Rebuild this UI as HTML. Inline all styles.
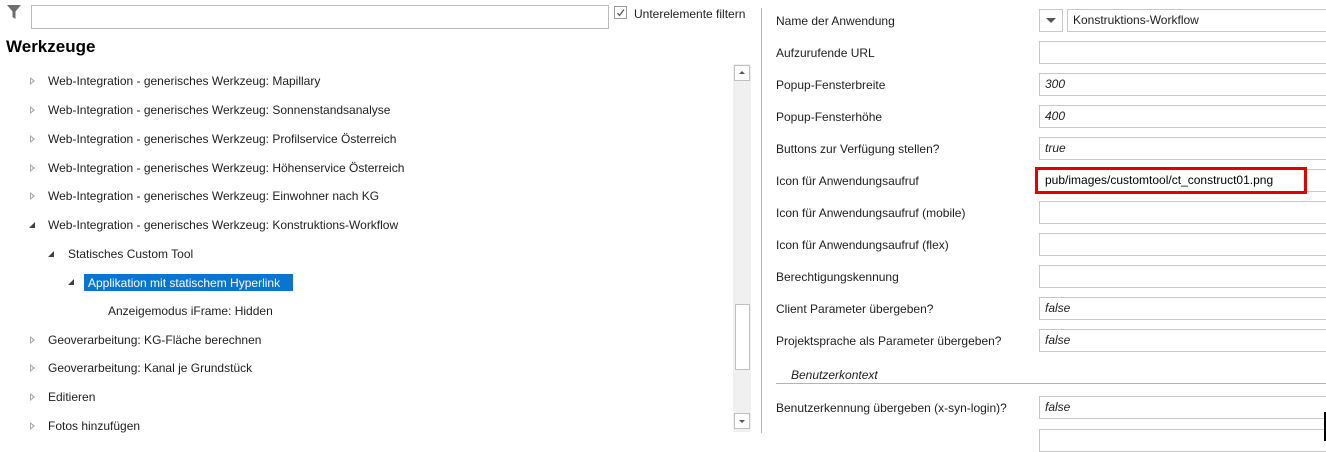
<!DOCTYPE html>
<html><head><meta charset="utf-8"><style>
*{margin:0;padding:0;box-sizing:border-box}
body{width:1326px;height:441px;background:#fff;position:relative;overflow:hidden;font-family:"Liberation Sans",sans-serif;font-size:12px;color:#1e1e1e}
.a{position:absolute;white-space:nowrap}
.t{position:absolute;white-space:nowrap;line-height:16px}
.ex{position:absolute;width:0;height:0;border-top:4px solid transparent;border-bottom:4px solid transparent;border-left:5px solid #a8a8a8}
.ex::after{content:"";position:absolute;left:-4px;top:-2px;border-top:2px solid transparent;border-bottom:2px solid transparent;border-left:2.5px solid #fff}
.co{position:absolute;width:0;height:0;border-left:6px solid transparent;border-bottom:6px solid #404040}
.inp{position:absolute;left:1039px;width:300px;height:23px;border:1px solid #c8c8c8;font-style:italic;font-size:12px;line-height:21px;padding-left:5px}
.lb{position:absolute;left:776px;line-height:16px;white-space:nowrap}
</style></head><body>
<!-- filter icon -->
<svg class="a" style="left:7px;top:5px" width="14" height="15" viewBox="0 0 14 15"><path d="M0 0H14L8.5 6.5V14L5.5 12V6.5Z" fill="#6e6e6e"/></svg>
<div class="a" style="left:31px;top:5px;width:578px;height:24px;border:1px solid #bcbcbc"></div>
<div class="a" style="left:614px;top:6px;width:13px;height:13px;border:1px solid #9a9a9a"></div>
<svg class="a" style="left:615px;top:7px" width="11" height="11"><path d="M2.5 6L4.5 8.5L9 2.5" stroke="#555" stroke-width="1.3" fill="none"/></svg>
<div class="t" style="left:634px;top:6px">Unterelemente filtern</div>
<div class="t" style="left:6px;top:37px;font-size:17px;font-weight:bold;line-height:20px;color:#000">Werkzeuge</div>

<div class="ex" style="left:30px;top:77px"></div><div class="t" style="left:48px;top:73px">Web-Integration - generisches Werkzeug: Mapillary</div>
<div class="ex" style="left:30px;top:106px"></div><div class="t" style="left:48px;top:102px">Web-Integration - generisches Werkzeug: Sonnenstandsanalyse</div>
<div class="ex" style="left:30px;top:135px"></div><div class="t" style="left:48px;top:131px">Web-Integration - generisches Werkzeug: Profilservice Österreich</div>
<div class="ex" style="left:30px;top:164px"></div><div class="t" style="left:48px;top:160px">Web-Integration - generisches Werkzeug: Höhenservice Österreich</div>
<div class="ex" style="left:30px;top:192px"></div><div class="t" style="left:48px;top:188px">Web-Integration - generisches Werkzeug: Einwohner nach KG</div>
<div class="co" style="left:29px;top:222px"></div><div class="t" style="left:48px;top:217px">Web-Integration - generisches Werkzeug: Konstruktions-Workflow</div>
<div class="co" style="left:48px;top:251px"></div><div class="t" style="left:68px;top:246px">Statisches Custom Tool</div>
<div class="co" style="left:68px;top:279px"></div><div class="a" style="left:84px;top:274px;width:209px;height:17px;background:#0a74d0"></div><div class="t" style="left:88px;top:275px;color:#fff">Applikation mit statischem Hyperlink</div>
<div class="t" style="left:108px;top:303px">Anzeigemodus iFrame: Hidden</div>
<div class="ex" style="left:30px;top:336px"></div><div class="t" style="left:48px;top:332px">Geoverarbeitung: KG-Fläche berechnen</div>
<div class="ex" style="left:30px;top:364px"></div><div class="t" style="left:48px;top:360px">Geoverarbeitung: Kanal je Grundstück</div>
<div class="ex" style="left:30px;top:393px"></div><div class="t" style="left:48px;top:389px">Editieren</div>
<div class="ex" style="left:30px;top:422px"></div><div class="t" style="left:48px;top:418px">Fotos hinzufügen</div>

<!-- scrollbar -->
<div class="a" style="left:733px;top:64px;width:18px;height:368px;background:#f0f0f0"></div>
<div class="a" style="left:734px;top:65px;width:16px;height:16px;border:1px solid #c0c0c0;background:#fff"></div>
<div class="a" style="left:739px;top:71px;border-left:3px solid transparent;border-right:3px solid transparent;border-bottom:3px solid #555"></div>
<div class="a" style="left:735px;top:304px;width:15px;height:66px;border:1px solid #c0c0c0;background:#fff"></div>
<div class="a" style="left:734px;top:413px;width:16px;height:16px;border:1px solid #c0c0c0;background:#fff"></div>
<div class="a" style="left:739px;top:420px;border-left:3px solid transparent;border-right:3px solid transparent;border-top:3px solid #555"></div>
<div class="a" style="left:761px;top:8px;width:1px;height:425px;background:#b4b4b4"></div>

<!-- properties -->
<div class="lb" style="top:13px">Name der Anwendung</div>
<div class="a" style="left:1039px;top:9px;width:24px;height:23px;border:1px solid #c8c8c8"></div>
<div class="a" style="left:1046px;top:18px;border-left:5px solid transparent;border-right:5px solid transparent;border-top:5px solid #555"></div>
<div class="inp" style="left:1067px;top:9px;font-style:normal">Konstruktions-Workflow</div>
<div class="lb" style="top:45px">Aufzurufende URL</div><div class="inp" style="top:41px"></div>
<div class="lb" style="top:77px">Popup-Fensterbreite</div><div class="inp" style="top:73px">300</div>
<div class="lb" style="top:109px">Popup-Fensterhöhe</div><div class="inp" style="top:105px">400</div>
<div class="lb" style="top:141px">Buttons zur Verfügung stellen?</div><div class="inp" style="top:137px">true</div>
<div class="lb" style="top:173px">Icon für Anwendungsaufruf</div><div class="inp" style="top:169px"></div>
<div class="a" style="left:1035px;top:167px;width:272px;height:27px;border:3px solid #e00000;background:#fff;padding-left:7px;line-height:20px;font-size:12px;color:#000">pub/images/customtool/ct_construct01.png</div>
<div class="lb" style="top:205px">Icon für Anwendungsaufruf (mobile)</div><div class="inp" style="top:201px"></div>
<div class="lb" style="top:237px">Icon für Anwendungsaufruf (flex)</div><div class="inp" style="top:233px"></div>
<div class="lb" style="top:269px">Berechtigungskennung</div><div class="inp" style="top:265px"></div>
<div class="lb" style="top:301px">Client Parameter übergeben?</div><div class="inp" style="top:297px">false</div>
<div class="lb" style="top:333px">Projektsprache als Parameter übergeben?</div><div class="inp" style="top:329px">false</div>
<div class="lb" style="left:791px;top:367px;font-style:italic">Benutzerkontext</div>
<div class="a" style="left:776px;top:383px;width:560px;height:1px;background:#b4b4b4"></div>
<div class="lb" style="top:400px">Benutzerkennung übergeben (x-syn-login)?</div><div class="inp" style="top:396px">false</div>
<div class="inp" style="top:429px"></div>
<div class="a" style="left:1324px;top:412px;width:2px;height:29px;background:#000"></div>
</body></html>
